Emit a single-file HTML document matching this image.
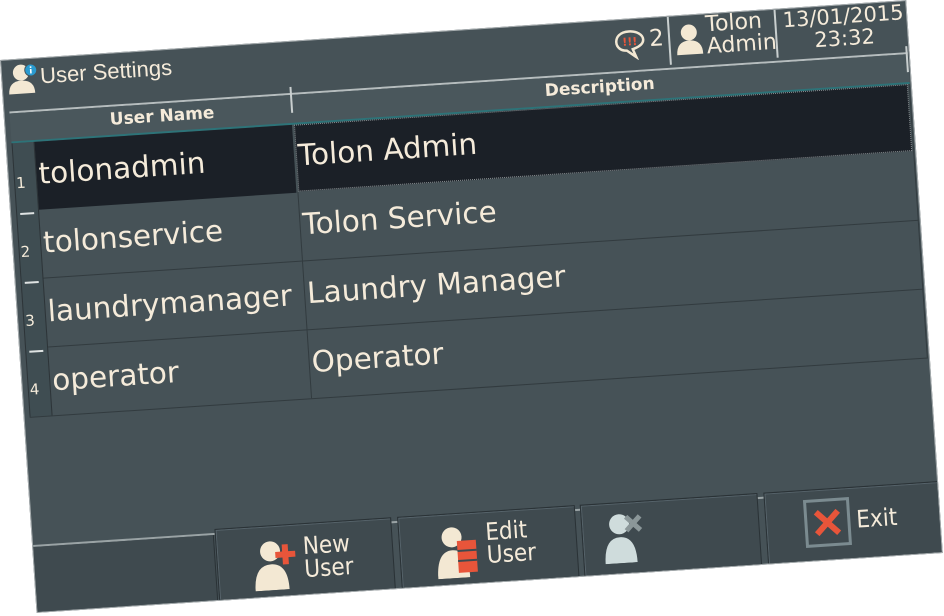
<!DOCTYPE html>
<html><head><meta charset="utf-8"><style>
html,body{margin:0;padding:0;background:#fff;width:944px;height:616px;overflow:hidden}
#s{position:absolute;left:0;top:0;width:908px;height:554px;background:#465257;transform-origin:0 0;transform:matrix(0.998,-0.066,0.066,0.998,0,60);border:1px solid #a7adaf;box-sizing:border-box;font-family:"DejaVu Sans","Liberation Sans",sans-serif;color:#f5ebda;overflow:hidden}
.a{position:absolute}
.t{white-space:nowrap}
.vl{position:absolute;width:2px;background:#c9cfcf}
.cell{position:absolute;font-size:29.5px;line-height:30px;white-space:nowrap}
.hl{position:absolute;height:1px;background:#323b3f}
.btn{position:absolute;top:481px;height:72px;background:#3f4a4f;border:1px solid #2a3236;box-shadow:inset 1px 1px 0 #56636a;box-sizing:border-box}
.bt{position:absolute;font-family:"DejaVu Sans Condensed","DejaVu Sans",sans-serif;font-size:24px;line-height:23px;color:#f5ebda}
</style></head><body>
<div id="s">
  <svg class="a" style="left:5px;top:3px" width="34" height="32" viewBox="0 0 34 32">
    <circle cx="14" cy="10" r="8" fill="#f3e8d3"/>
    <path d="M1 31 Q1 18 14 18 Q27 18 27 31 Z" fill="#f3e8d3"/>
    <circle cx="24" cy="8" r="6" fill="#2a9bd0" stroke="#465257" stroke-width="1"/>
    <rect x="23.2" y="7" width="1.6" height="4.5" fill="#fff"/><rect x="23.2" y="4.3" width="1.6" height="1.6" fill="#fff"/>
  </svg>
  <div class="a t" style="left:38px;top:5px;font-size:22px;font-family:'Liberation Sans',sans-serif">User Settings</div>

  <svg class="a" style="left:612px;top:9px" width="34" height="32" viewBox="0 0 34 32">
    <path d="M16 3 C7 3 3 8 3 13 C3 18 7 22 13 22 L22 29 L19 21 C26 19 30 16 30 12 C30 7 24 3 16 3 Z" fill="none" stroke="#f3e8d3" stroke-width="2.5"/>
    <text x="9" y="17" font-size="11" font-weight="bold" fill="#e8553a" font-family="DejaVu Sans">!!!</text>
  </svg>
  <div class="a t" style="left:648px;top:8px;font-size:23px">2</div>
  <div class="vl" style="left:667px;top:0;height:48px"></div>
  <svg class="a" style="left:674px;top:8px" width="28" height="32" viewBox="0 0 28 32">
    <circle cx="14" cy="9" r="8" fill="#f3e8d3"/><path d="M1 31 Q1 17 14 17 Q27 17 27 31 Z" fill="#f3e8d3"/>
  </svg>
  <div class="a t" style="left:705px;top:0px;font-size:22px;line-height:22px">Tolon<br>Admin</div>
  <div class="vl" style="left:774px;top:0;height:48px"></div>
  <div class="a t" style="left:778px;top:0px;width:130px;text-align:center;font-size:21px;line-height:22px">13/01/2015<br>23:32</div>

  <div class="a" style="left:5px;top:51px;width:900px;height:2px;background:#b6bdbe"></div>
  <div class="a" style="left:5px;top:53px;width:900px;height:29px;background:#4a575c"></div>
  <div class="a" style="left:5px;top:81px;width:900px;height:2px;background:#2d7378"></div>
  <div class="vl" style="left:286px;top:45px;height:26px"></div>
  <div class="vl" style="left:903px;top:45px;height:26px"></div>
  <div class="a t" style="left:28px;top:56px;width:258px;text-align:center;font-size:17px;font-weight:bold">User Name</div>
  <div class="a t" style="left:288px;top:56px;width:615px;text-align:center;font-size:17px;font-weight:bold">Description</div>

  <div class="a" style="left:5px;top:83px;width:23px;height:274px;background:#3f4d52"></div>
  <div class="a" style="left:5px;top:83px;width:1px;height:274px;background:#2d3438"></div>
  <div class="a" style="left:27px;top:83px;width:1px;height:274px;background:#2d3438"></div>
  <div class="a t" style="left:7px;top:114px;font-size:15px">1</div>
  <div class="a t" style="left:7px;top:183px;font-size:15px">2</div>
  <div class="a t" style="left:7px;top:252px;font-size:15px">3</div>
  <div class="a t" style="left:7px;top:321px;font-size:15px">4</div>
  <div class="a" style="left:9px;top:153px;width:14px;height:2px;background:#dfe3e3"></div>
  <div class="a" style="left:9px;top:222px;width:14px;height:2px;background:#dfe3e3"></div>
  <div class="a" style="left:9px;top:291px;width:14px;height:2px;background:#dfe3e3"></div>

  <div class="a" style="left:28px;top:83px;width:258px;height:68px;background:#1b2027"></div>
  <div class="a" style="left:288px;top:83px;width:615px;height:67px;background:#1b2027;border:1px dotted #8a9093;box-sizing:border-box"></div>
  <div class="hl" style="left:28px;top:219px;width:877px"></div>
  <div class="hl" style="left:28px;top:288px;width:877px"></div>
  <div class="hl" style="left:5px;top:357px;width:900px"></div>
  <div class="a" style="left:287px;top:150px;width:1px;height:207px;background:#323b3f"></div>
  <div class="a" style="left:904px;top:83px;width:1px;height:274px;background:#323b3f"></div>

  <div class="cell" style="left:30px;top:100px">tolonadmin</div>
  <div class="cell" style="left:290px;top:99px">Tolon Admin</div>
  <div class="cell" style="left:30px;top:169px">tolonservice</div>
  <div class="cell" style="left:290px;top:168px">Tolon Service</div>
  <div class="cell" style="left:30px;top:238px">laundrymanager</div>
  <div class="cell" style="left:290px;top:237px">Laundry Manager</div>
  <div class="cell" style="left:30px;top:307px">operator</div>
  <div class="cell" style="left:290px;top:306px">Operator</div>

  <div class="a" style="left:0;top:485px;width:908px;height:2px;background:#9aa3a5"></div>
  <div class="a" style="left:0;top:487px;width:180px;height:67px;background:#3f4a4f;border-right:1px solid #2a3236"></div>

  <div class="btn" style="left:182px;width:177px">
    <svg class="a" style="left:36px;top:12px" width="44" height="52" viewBox="0 0 44 52">
      <circle cx="17" cy="13" r="10" fill="#f3e8d3"/><path d="M0 52 Q0 26 17 26 Q34 26 34 52 Z" fill="#f3e8d3"/>
      <path d="M22 14 h7 v-7 h6 v7 h7 v6 h-7 v7 h-6 v-7 h-7 Z" fill="#e8553a"/>
    </svg>
    <div class="bt" style="left:86px;top:11px">New<br>User</div>
  </div>
  <div class="btn" style="left:365px;width:178px">
    <svg class="a" style="left:36px;top:10px" width="44" height="54" viewBox="0 0 44 54">
      <circle cx="16" cy="13" r="10" fill="#f3e8d3"/><path d="M0 54 Q0 26 16 26 Q32 26 32 54 Z" fill="#f3e8d3"/>
      <rect x="21" y="17" width="19" height="32" fill="#e8553a"/>
      <rect x="21" y="26" width="19" height="2" fill="#3f4a4f"/><rect x="21" y="36" width="19" height="2" fill="#3f4a4f"/>
    </svg>
    <div class="bt" style="left:86px;top:9px">Edit<br>User</div>
  </div>
  <div class="btn" style="left:548px;width:178px">
    <svg class="a" style="left:20px;top:8px" width="46" height="52" viewBox="0 0 46 52">
      <circle cx="17" cy="13" r="10" fill="#cfdcdc"/><path d="M1 52 Q1 26 17 26 Q33 26 33 52 Z" fill="#cfdcdc"/>
      <path d="M24 6 l14 14 M38 6 l-14 14" stroke="#8b9799" stroke-width="5"/>
    </svg>
  </div>
  <div class="btn" style="left:732px;width:178px">
    <div class="a" style="left:38px;top:9px;width:46px;height:48px;border:3px solid #7b8b90;box-sizing:border-box"></div>
    <svg class="a" style="left:46px;top:18px" width="30" height="30" viewBox="0 0 30 30">
      <path d="M4 4 L26 26 M26 4 L4 26" stroke="#e8553a" stroke-width="6"/>
    </svg>
    <div class="bt" style="left:90px;top:21px">Exit</div>
  </div>
</div>
</body></html>
